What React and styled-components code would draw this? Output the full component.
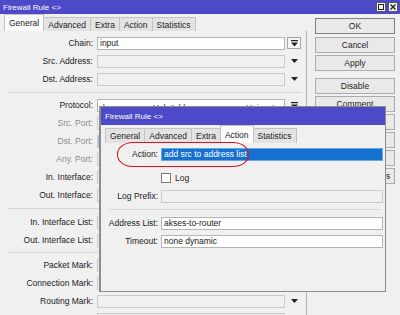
import React from 'react'
import styled, { createGlobalStyle } from 'styled-components'

const GlobalStyle = createGlobalStyle`
html, body {
  margin: 0;
  padding: 0;
  background: #f0f0f0;
}
body {
  font-family: "Liberation Sans", Arial, sans-serif;
  font-size: 8.5px;
  color: #1f1f1f;
}
`

const Screen = styled.div`
position: relative;
width: 400px;
height: 315px;
overflow: hidden;
background: #f0f0f0;
`

const TitleBar = styled.div`
height: ${p => p.$h}px;
flex: none;
background: #4c4ac6;
color: #fff;
font-size: 8px;
display: flex;
align-items: center;
justify-content: space-between;
padding: 0 2px 0 ${p => p.$pad}px;
`

const TitleButtons = styled.div`
display: flex;
gap: 2px;
`

const TitleBtn = styled.div`
width: 10px;
height: 10px;
box-sizing: border-box;
border: 1px solid #5a5a5a;
background: #f2f2f2;
display: flex;
align-items: center;
justify-content: center;
`

const Main = styled.div`
display: flex;
height: 301px;
`

const Panel = styled.div`
width: 307px;
flex: none;
display: flex;
flex-direction: column;
`

const TabStrip = styled.div`
height: ${p => p.$h}px;
flex: none;
display: flex;
align-items: flex-end;
padding-left: 4px;
`

const Tab = styled.div`
height: ${p => (p.$active ? p.$h : p.$h - 3)}px;
box-sizing: border-box;
padding: 0 4px;
border: 1px solid #c3c3c3;
border-bottom: none;
margin-right: -1px;
background: ${p => (p.$active ? '#fbfbfb' : '#e3e3e3')};
display: flex;
align-items: center;
white-space: nowrap;
`

const Form = styled.div`
flex: 1;
padding-top: ${p => p.$top}px;
border-right: ${p => (p.$divider ? '1px solid #b3b3b3' : 'none')};
`

const Row = styled.div`
display: flex;
align-items: center;
height: 18px;
margin-top: ${p => p.$gap || 0}px;
`

const Label = styled.div`
width: ${p => p.$w}px;
flex: none;
text-align: right;
white-space: nowrap;
color: ${p => (p.$muted ? '#8d8d8d' : '#202020')};
`

const Field = styled.div`
width: ${p => p.$w}px;
margin-left: ${p => p.$gap}px;
height: 13px;
flex: none;
box-sizing: border-box;
border: 1px solid ${p => (p.$tone === 'white' ? '#b4b4b4' : p.$tone === 'blue' ? '#6ea3dc' : '#cacaca')};
background: ${p => (p.$tone === 'white' ? '#ffffff' : p.$tone === 'blue' ? '#1571d0' : p.$tone === 'sky' ? '#9cc0ea' : '#f0f0f0')};
color: ${p => (p.$tone === 'blue' ? '#ffffff' : '#202020')};
display: flex;
align-items: ${p => (p.$drop ? 'flex-start' : 'center')};
padding-left: 2px;
padding-top: ${p => (p.$drop ? 3 : 0)}px;
overflow: hidden;
white-space: nowrap;
`

const Chunk = styled.span`
width: ${p => p.$w}px;
flex: none;
`

const Slot = styled.div`
width: 14px;
height: 12px;
margin-left: 2px;
flex: none;
box-sizing: border-box;
border: 1px solid ${p => (p.$boxed ? '#a5a5a5' : 'transparent')};
background: ${p => (p.$boxed ? '#f6f6f6' : 'transparent')};
display: flex;
align-items: center;
justify-content: center;
`

const Stub = styled.div`
width: 12px;
height: 13px;
margin-left: 2px;
flex: none;
box-sizing: border-box;
border: 1px solid #c2c2c2;
background: #ececec;
`

const Separator = styled.div`
height: ${p => p.$h}px;
display: flex;
align-items: center;
padding: 0 5px 0 8px;
&::after {
  content: '';
  flex: 1;
  height: 1px;
  background: #d6d6d6;
}
`

const ButtonColumn = styled.div`
width: 80px;
margin-left: 8px;
padding-top: 4px;
display: flex;
flex-direction: column;
`

const Btn = styled.div`
height: 16px;
box-sizing: border-box;
margin-top: ${p => p.$top || 0}px;
margin-bottom: 2px;
border: 1px solid ${p => (p.$default ? '#7e7e7e' : '#acacac')};
background: #e9e9e9;
display: flex;
align-items: center;
justify-content: center;
white-space: nowrap;
`

const Dialog = styled.div`
position: absolute;
left: 99px;
top: 106px;
width: 287px;
height: 186px;
box-sizing: border-box;
border: 1px solid #8c8c8c;
border-left-width: 2px;
background: #f0f0f0;
overflow: hidden;
display: flex;
flex-direction: column;
z-index: 1;
`

const CheckBox = styled.div`
width: 10px;
height: 10px;
box-sizing: border-box;
border: 1px solid #7b7b7b;
background: #fff;
margin-left: 3px;
margin-right: 4px;
`

const Highlight = styled.div`
position: absolute;
left: 117px;
top: 142px;
width: 132px;
height: 25px;
box-sizing: border-box;
border: 1.5px solid #d9141c;
border-radius: 16px / 12px;
z-index: 2;
`

const Down = () => (
  <svg width="7" height="4" viewBox="0 0 7 4">
    <polygon points="0,0 7,0 3.5,4" fill="#222" />
  </svg>
)

const Pin = () => (
  <svg width="7" height="7" viewBox="0 0 7 7">
    <rect x="0" y="0" width="7" height="1.2" fill="#222" />
    <polygon points="0,2.5 7,2.5 3.5,6.5" fill="#222" />
  </svg>
)

const rows = [
  { label: 'Chain:', tone: 'white', text: 'input', slot: 'pin' },
  { label: 'Src. Address:', slot: 'down' },
  { label: 'Dst. Address:', slot: 'down' },
  { sep: 8 },
  { label: 'Protocol:', tone: 'white', proto: true, slot: 'bar' },
  { label: 'Src. Port:', muted: true },
  { label: 'Dst. Port:', muted: true, tone: 'sky' },
  { label: 'Any. Port:', muted: true },
  { label: 'In. Interface:' },
  { label: 'Out. Interface:' },
  { sep: 9 },
  { label: 'In. Interface List:' },
  { label: 'Out. Interface List:' },
  { sep: 7 },
  { label: 'Packet Mark:' },
  { label: 'Connection Mark:' },
  { label: 'Routing Mark:', slot: 'down' },
  { label: '' },
]

const buttons = [
  { text: 'OK', isDefault: true },
  { text: 'Cancel', top: 1 },
  { text: 'Apply' },
  { text: 'Disable', top: 5 },
  { text: 'Comment' },
  { text: 'Copy' },
  { text: 'Remove' },
  { text: 'Reset Counters' },
  { text: 'Reset All Counters' },
]

const tabs = ['General', 'Advanced', 'Extra', 'Action', 'Statistics']

const Tabs = ({ active, h }) => (
  <TabStrip $h={h}>
    {tabs.map(t => (
      <Tab key={t} $h={h} $active={t === active}>{t}</Tab>
    ))}
  </TabStrip>
)

const BackRow = ({ row }) => {
  if (row.sep) return <Separator $h={row.sep} />
  return (
    <Row>
      <Label $w={93} $muted={row.muted}>{row.label}</Label>
      <Field $w={188} $gap={4} $tone={row.tone} $drop={row.proto}>
        {row.proto ? (
          <>
            <Chunk $w={53}>dmac</Chunk>
            <Chunk $w={93}>Uch Address</Chunk>
            <Chunk $w={40}>Unicast</Chunk>
          </>
        ) : row.text}
      </Field>
      {row.slot && (
        <Slot $boxed={row.slot === 'pin'}>
          {row.slot === 'down' ? <Down /> : <Pin />}
        </Slot>
      )}
    </Row>
  )
}

export default function App() {
  return (
    <Screen>
      <GlobalStyle />
      <TitleBar $h={14} $pad={3}>
        <span>Firewall Rule &lt;&gt;</span>
        <TitleButtons>
          <TitleBtn>
            <svg width="6" height="6" viewBox="0 0 6 6">
              <rect x="0.5" y="0.5" width="5" height="5" fill="none" stroke="#222" />
            </svg>
          </TitleBtn>
          <TitleBtn>
            <svg width="6" height="6" viewBox="0 0 6 6">
              <path d="M0.5 0.5 L5.5 5.5 M5.5 0.5 L0.5 5.5" stroke="#222" strokeWidth="1.4" />
            </svg>
          </TitleBtn>
        </TitleButtons>
      </TitleBar>
      <Main>
        <Panel>
          <Tabs active="General" h={17} />
          <Form $top={3} $divider>
            {rows.map((r, i) => <BackRow key={i} row={r} />)}
          </Form>
        </Panel>
        <ButtonColumn>
          {buttons.map(b => (
            <Btn key={b.text} $top={b.top} $default={b.isDefault}>{b.text}</Btn>
          ))}
        </ButtonColumn>
      </Main>

      <Dialog>
        <TitleBar $h={18} $pad={4}>
          <span>Firewall Rule &lt;&gt;</span>
        </TitleBar>
        <Tabs active="Action" h={18} />
        <Form $top={2}>
          <Row>
            <Label $w={57}>Action:</Label>
            <Field $w={222} $gap={3} $tone="blue">add src to address list</Field>
            <Stub />
          </Row>
          <Row $gap={6}>
            <Label $w={57} />
            <CheckBox />
            <span>Log</span>
          </Row>
          <Row>
            <Label $w={57}>Log Prefix:</Label>
            <Field $w={222} $gap={3} />
          </Row>
          <Separator $h={9} />
          <Row>
            <Label $w={57}>Address List:</Label>
            <Field $w={222} $gap={3} $tone="white">akses-to-router</Field>
            <Stub />
          </Row>
          <Row>
            <Label $w={57}>Timeout:</Label>
            <Field $w={222} $gap={3} $tone="white">none dynamic</Field>
            <Stub />
          </Row>
        </Form>
      </Dialog>
      <Highlight />
    </Screen>
  )
}
